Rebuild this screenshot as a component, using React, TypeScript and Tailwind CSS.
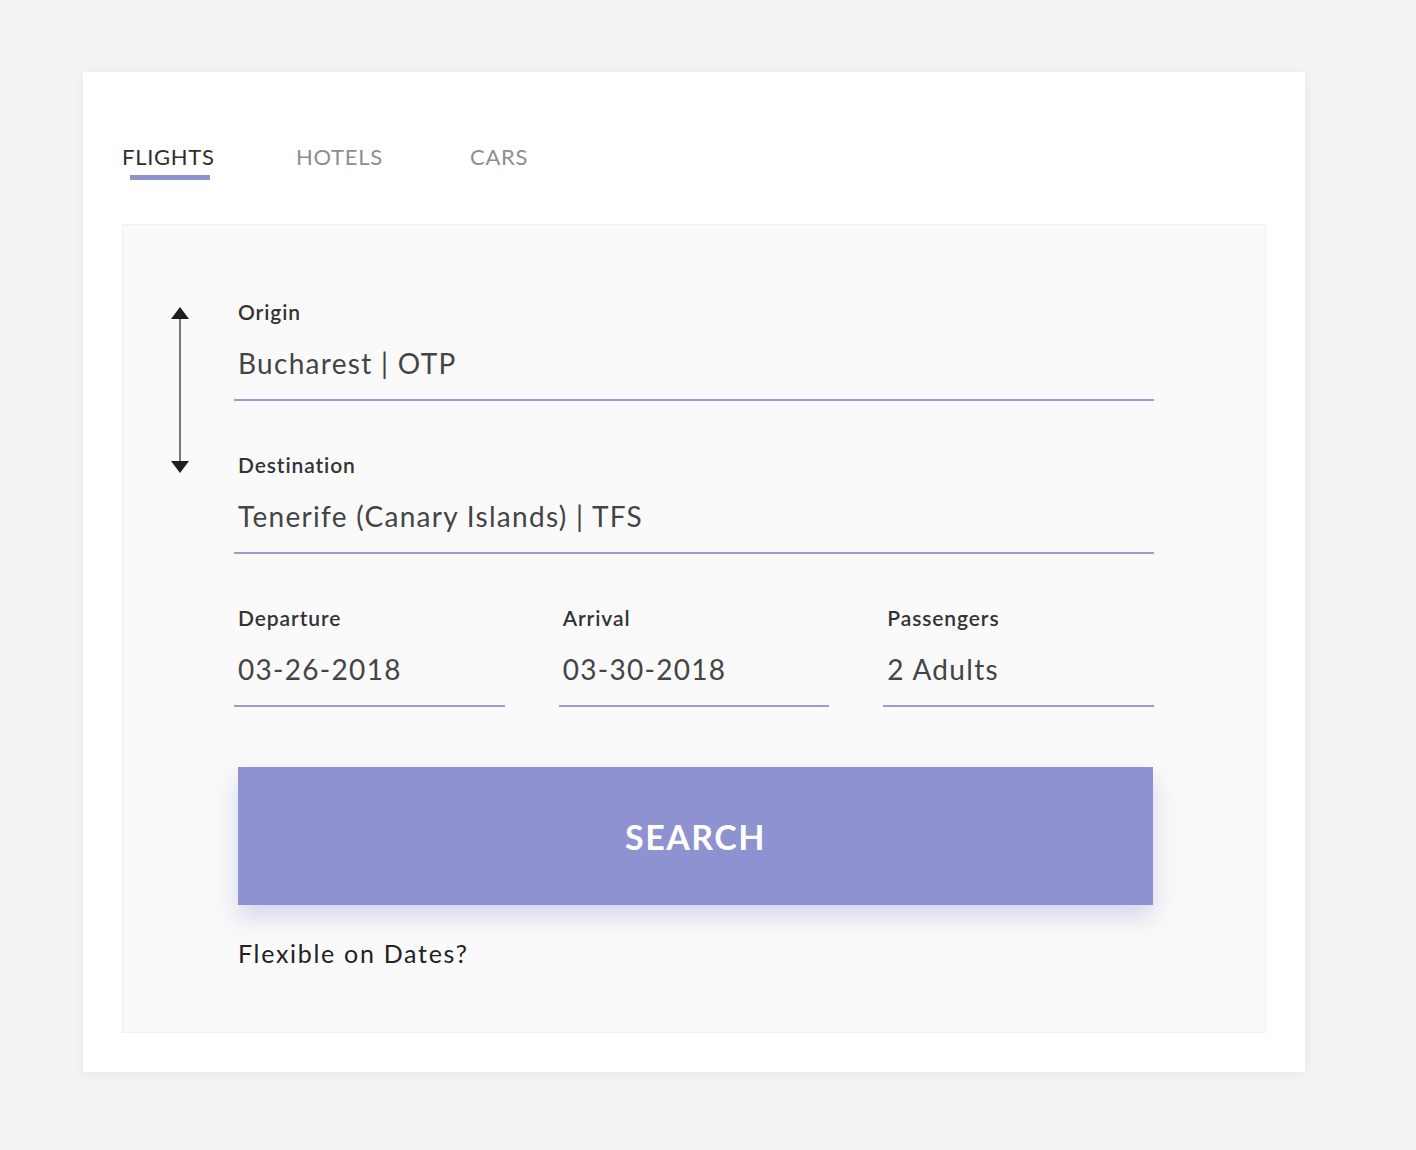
import { useState } from "react";

const tabs = ["FLIGHTS", "HOTELS", "CARS"];

function Field({ label, value, className = "" }: { label: string; value: string; className?: string }) {
  return (
    <div className={`border-b-2 border-[#9a9ddb] pb-[18px] ${className}`}>
      <div className="pl-1 text-[21px] leading-6 tracking-[0.9px] font-semibold text-[#333]">{label}</div>
      <div className="pl-1 mt-[21px] text-[28px] leading-9 tracking-[1.3px] text-[#444]">{value}</div>
    </div>
  );
}

function SwapArrow() {
  return (
    <svg width="20" height="168" viewBox="0 0 20 168" className="shrink-0">
      <line x1="10" y1="10" x2="10" y2="158" stroke="#7a7a7a" strokeWidth="2" />
      <path d="M1 13 L10 1 L19 13 Z" fill="#1f1f1f" />
      <path d="M1 155 L10 167 L19 155 Z" fill="#1f1f1f" />
    </svg>
  );
}

export default function App() {
  const [active, setActive] = useState(0);

  return (
    <div className="min-h-[1150px] bg-[#f3f3f3] pt-[72px] pl-[83px] font-['Lato',sans-serif]">
      <div className="w-[1222px] bg-white shadow-[0_2px_12px_rgba(0,0,0,0.05)] px-[39px] pt-[71px] pb-[39px]">

        {/* Tabs */}
        <div className="flex">
          {tabs.map((t, i) => (
            <button
              key={t}
              onClick={() => setActive(i)}
              className={`w-[174px] text-left text-[22px] leading-7 tracking-[0.7px] ${i === active ? "text-[#2e2e2e]" : "text-[#8e8e8e]"}`}
            >
              {t}
              <div className={`mt-[4px] ml-[8px] h-[5px] w-[80px] ${i === active ? "bg-[#8f92d1]" : "bg-transparent"}`} />
            </button>
          ))}
        </div>

        {/* Form panel */}
        <div className="mt-[44px] bg-[#fafafa] border border-[#f0f0f0] pl-[47px] pr-[111px] pt-[75px] pb-[64px]">
          <div className="flex">
            <div className="pt-[6px] mr-[44px]">
              <SwapArrow />
            </div>
            <div className="flex-1">
              <Field label="Origin" value="Bucharest | OTP" />
              <Field label="Destination" value="Tenerife (Canary Islands) | TFS" className="mt-[52px]" />
            </div>
          </div>

          <div className="ml-[64px] mt-[52px] grid grid-cols-3 gap-x-[54px]">
            <Field label="Departure" value="03-26-2018" />
            <Field label="Arrival" value="03-30-2018" />
            <Field label="Passengers" value="2 Adults" />
          </div>

          <button className="ml-[68px] mt-[60px] h-[138px] w-[915px] bg-[#8f92d1] text-white text-[34px] tracking-[1.5px] font-bold shadow-[0_12px_22px_rgba(143,146,209,0.35)]">
            SEARCH
          </button>

          <div className="ml-[68px] mt-[33px] text-[25px] leading-[30px] tracking-[1.7px] text-[#222]">Flexible on Dates?</div>
        </div>
      </div>
    </div>
  );
}
